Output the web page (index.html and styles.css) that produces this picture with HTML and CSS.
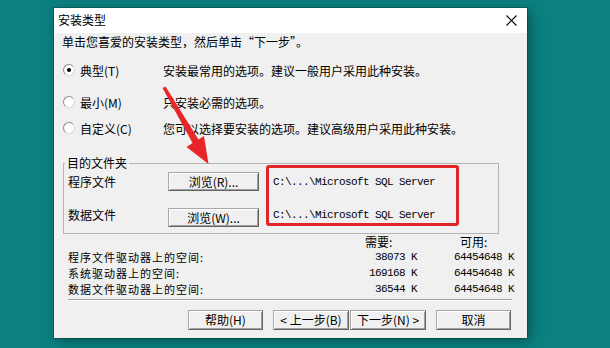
FILE: index.html
```html
<!DOCTYPE html>
<html lang="zh-CN">
<head>
    <meta charset="UTF-8">
    <title>安装类型</title>
    <link rel="stylesheet" href="styles.css">
</head>
<body>
    <div class="dialog">
        <div class="titlebar">
            <span class="title">安装类型</span>
            <svg class="close" width="11" height="11" viewBox="0 0 11 11">
                <path d="M0.5 0.5 L10.5 10.5 M10.5 0.5 L0.5 10.5" stroke="#000" stroke-width="1.1" fill="none"/>
            </svg>
        </div>

        <div class="content">
            <p class="intro">单击您喜爱的安装类型，然后单击“下一步”。</p>

            <div class="option option-first">
                <span class="radio checked"></span>
                <span class="option-label">典型(T)</span>
                <span class="option-desc">安装最常用的选项。建议一般用户采用此种安装。</span>
            </div>
            <div class="option option-second">
                <span class="radio"></span>
                <span class="option-label">最小(M)</span>
                <span class="option-desc">只安装必需的选项。</span>
            </div>
            <div class="option option-third">
                <span class="radio"></span>
                <span class="option-label">自定义(C)</span>
                <span class="option-desc">您可以选择要安装的选项。建议高级用户采用此种安装。</span>
            </div>

            <fieldset class="folders">
                <legend>目的文件夹</legend>
                <div class="folder-row">
                    <span class="folder-label">程序文件</span>
                    <button class="btn browse">浏览(R)...</button>
                    <span class="path">C:\...\Microsoft SQL Server</span>
                </div>
                <div class="folder-row second">
                    <span class="folder-label">数据文件</span>
                    <button class="btn browse">浏览(W)...</button>
                    <span class="path">C:\...\Microsoft SQL Server</span>
                </div>
            </fieldset>

            <div class="space">
                <span></span>
                <span class="head need-head">需要:</span>
                <span class="head free-head">可用:</span>

                <span class="space-label">程序文件驱动器上的空间:</span>
                <span class="num">38073 K</span>
                <span class="num">64454648 K</span>

                <span class="space-label">系统驱动器上的空间:</span>
                <span class="num">169168 K</span>
                <span class="num">64454648 K</span>

                <span class="space-label">数据文件驱动器上的空间:</span>
                <span class="num">36544 K</span>
                <span class="num">64454648 K</span>
            </div>

            <div class="separator"></div>

            <div class="buttons">
                <button class="btn">帮助(H)</button>
                <div class="nav">
                    <button class="btn">&lt; 上一步(B)</button>
                    <button class="btn">下一步(N) &gt;</button>
                </div>
                <button class="btn">取消</button>
            </div>
        </div>
    </div>

    <div class="highlight"></div>
    <svg class="arrow" width="610" height="348" viewBox="0 0 610 348">
        <polygon points="162.5,88 165.5,86.5 198.5,139.5 204,136 208.5,164 186.5,147 192.5,143" fill="#e8262a"/>
    </svg>
</body>
</html>
```

FILE: styles.css
```css
body {
    margin: 0;
    background: #0b8080;
    font-family: "Noto Sans CJK SC", sans-serif;
    font-size: 12px;
    color: #000;
    position: relative;
    width: 610px;
    height: 348px;
    overflow: hidden;
}
.dialog {
    margin: 8px 0 0 54px;
    width: 473px;
    height: 330px;
    background: #f0f0f0;
    box-shadow: 0 0 0 1px rgba(0, 0, 0, 0.2), 3px 3px 12px rgba(0, 0, 0, 0.35);
    display: flex;
    flex-direction: column;
}
.titlebar {
    height: 25px;
    background: #fff;
    display: flex;
    align-items: center;
    justify-content: space-between;
    padding: 0 10px 0 4px;
}
.title {
    line-height: 16px;
    margin-top: -2px;
}
.close {
    display: block;
    margin-top: -1px;
}
.content {
    flex: 1;
    display: flex;
    flex-direction: column;
}
.intro {
    margin: 1px 0 0 8px;
    line-height: 16px;
}
.option {
    display: flex;
    align-items: center;
    height: 16px;
    margin-left: 9px;
}
.option-first {
    margin-top: 12px;
}
.option-second {
    margin-top: 16px;
}
.option-third {
    margin-top: 10px;
}
.radio {
    width: 10px;
    height: 10px;
    border-radius: 50%;
    border: 1px solid #8c8c8c;
    border-right-color: #d8d8d8;
    border-bottom-color: #d8d8d8;
    background: #fff;
    position: relative;
    flex: none;
}
.radio.checked::after {
    content: "";
    position: absolute;
    left: 3px;
    top: 3px;
    width: 4px;
    height: 4px;
    border-radius: 50%;
    background: #000;
}
.option-label {
    margin-left: 5px;
    width: 83px;
}
.folders {
    margin: 19px 0 0 9px;
    width: 436px;
    box-sizing: border-box;
    border: 1px solid #b4b4b4;
    padding: 1px 4px 6px 4px;
    min-inline-size: 0;
}
.folders legend {
    padding: 0 2px;
    margin-left: -3px;
    line-height: 16px;
}
.folder-row {
    display: flex;
    align-items: center;
    height: 19px;
}
.folder-row.second {
    margin-top: 17px;
}
.folder-row.second .folder-label,
.folder-row.second .path {
    margin-top: -6px;
}
.folder-label {
    width: 100px;
    flex: none;
}
.btn {
    font-family: "Noto Sans CJK SC", sans-serif;
    font-size: 12px;
    color: #000;
    background: #f0f0f0;
    border: 1px solid #a8a8a8;
    border-right-color: #646464;
    border-bottom-color: #646464;
    box-shadow: inset 1px 1px #fff, inset -1px -1px #a0a0a0;
    padding: 0;
    height: 20px;
    line-height: 16px;
    box-sizing: border-box;
}
.browse {
    width: 91px;
    height: 19px;
}
.path {
    margin-left: 14px;
    font-family: "Liberation Mono", monospace;
    font-size: 11px;
    letter-spacing: -0.6px;
}
.space {
    margin: 1px 0 0 14px;
    display: grid;
    grid-template-columns: 297px 52px 97px;
    grid-template-rows: 14px 16px 16px 16px;
    line-height: 14px;
    align-items: center;
}
.head {
    text-align: left;
}
.free-head {
    padding-left: 43px;
}
.space-label {
    font-size: 11px;
    letter-spacing: 1px;
}
.num {
    text-align: right;
    font-family: "Liberation Mono", monospace;
    font-size: 11px;
    letter-spacing: -0.6px;
}
.separator {
    margin: 2px 0 0 14px;
    width: 444px;
    height: 1px;
    background: #a0a0a0;
    border-bottom: 1px solid #fff;
}
.buttons {
    margin: 9px 0 0 134px;
    display: flex;
    gap: 10px;
}
.buttons .btn {
    width: 75px;
}
.nav {
    display: flex;
    gap: 1px;
}
.nav .btn {
    width: 76px;
}
.highlight {
    position: absolute;
    left: 266px;
    top: 165px;
    width: 193px;
    height: 61px;
    box-sizing: border-box;
    border: 3px solid #e02626;
    border-radius: 3px;
}
.arrow {
    position: absolute;
    left: 0;
    top: 0;
}
```
